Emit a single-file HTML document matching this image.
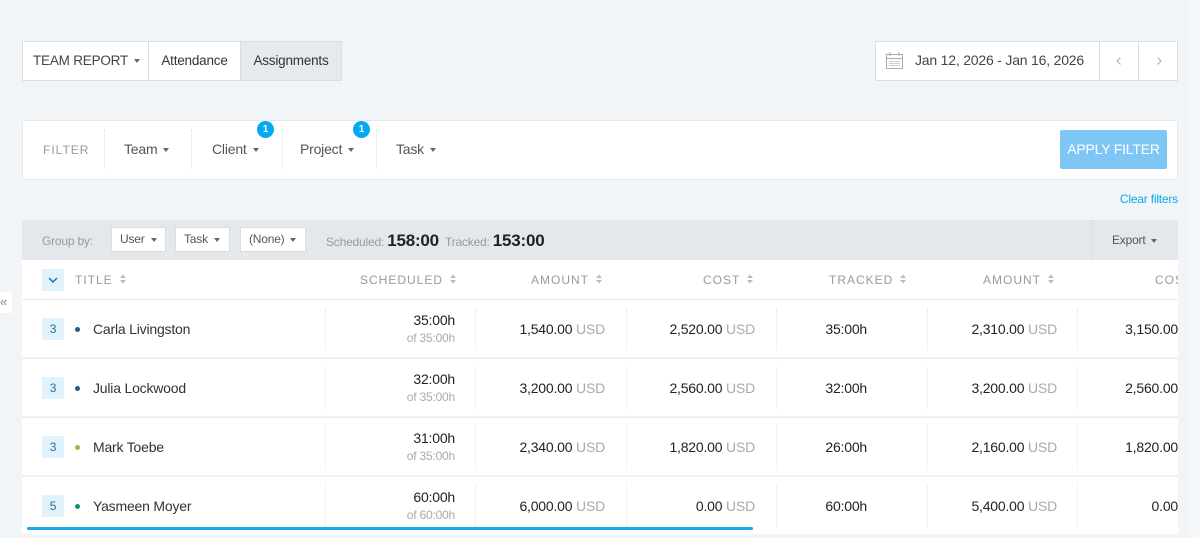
<!DOCTYPE html>
<html><head><meta charset="utf-8"><style>
*{box-sizing:border-box;margin:0;padding:0}
body{width:1200px;height:538px;overflow:hidden;background:#f2f5f8;font-family:"Liberation Sans",sans-serif;color:#333;position:relative;letter-spacing:-0.2px}
.a{position:absolute}
.car{display:inline-block;width:0;height:0;border-left:3.5px solid transparent;border-right:3.5px solid transparent;border-top:4px solid #666;vertical-align:middle;margin-left:6px}
.tab{position:absolute;top:41px;height:40px;line-height:38px;font-size:13.5px;border:1px solid #d7dde2;background:#fff;text-align:center}
.fl{position:absolute;top:141px;font-size:14px;color:#555}
.dv{position:absolute;top:130px;height:40px;border-left:1px dotted #dde2e6}
.badge{position:absolute;top:121px;width:17px;height:17px;border-radius:50%;background:#03a9f4;color:#fff;font-size:10px;text-align:center;line-height:17px;font-weight:bold;letter-spacing:0}
.sel{position:absolute;top:227px;height:25px;background:#fff;border:1px solid #d7dde2;font-size:12px;color:#555;line-height:23px;padding-left:8px}
.th{position:absolute;top:273px;font-size:12px;color:#999;letter-spacing:1px}
.so{display:inline-block;margin-left:6px;vertical-align:-1px}
.row{position:absolute;left:22px;width:1156px;height:58px;background:#fff;border-top:1px solid #eaedf0}
.num{position:absolute;left:20px;top:18px;width:22px;height:22px;background:#e1f2fc;color:#1e6fa8;font-size:12px;text-align:center;line-height:22px}
.dot{position:absolute;left:53px;top:27px;width:5px;height:5px;border-radius:50%}
.nm{position:absolute;left:71px;top:21px;font-size:14px;color:#333}
.v{position:absolute;font-size:14px;color:#222;text-align:right;white-space:nowrap}
.v span{color:#aaa}
.sub{font-size:12px;color:#999}
.vd{position:absolute;top:8px;height:42px;border-left:1px dotted #e2e6ea}
</style></head><body>
<svg width="0" height="0" style="position:absolute"><defs><symbol id="s" viewBox="0 0 8 12"><path d="M1 5L4 1.5 7 5z M1 7L4 10.5 7 7z" fill="#bbb"/></symbol></defs></svg>
<div class="a" style="right:0;top:0;width:12px;height:538px;background:#f5f7f9"></div>
<div class="tab" style="left:22px;width:127px;color:#444;padding-left:2px">TEAM REPORT<span class="car"></span></div>
<div class="tab" style="left:148px;width:93px">Attendance</div>
<div class="tab" style="left:240px;width:102px;background:#e5eaee">Assignments</div>

<div class="a" style="left:875px;top:41px;width:303px;height:40px;background:#fff;border:1px solid #d7dde2"></div>
<svg class="a" style="left:885px;top:51px" width="20" height="20" viewBox="0 0 20 20"><rect x="1.5" y="3.5" width="16" height="14" fill="none" stroke="#aaa"/><line x1="1.5" y1="7.5" x2="17.5" y2="7.5" stroke="#aaa"/><line x1="5" y1="1" x2="5" y2="5" stroke="#aaa"/><line x1="14" y1="1" x2="14" y2="5" stroke="#aaa"/><g fill="#ccc"><rect x="4" y="10" width="11" height="1"/><rect x="4" y="12" width="11" height="1"/><rect x="4" y="14" width="11" height="1"/></g></svg>
<div class="a" style="left:915px;top:52px;font-size:14px;color:#444">Jan 12, 2026 - Jan 16, 2026</div>
<div class="a" style="left:1099px;top:42px;height:38px;border-left:1px solid #d7dde2"></div>
<div class="a" style="left:1138px;top:42px;height:38px;border-left:1px solid #d7dde2"></div>
<svg class="a" style="left:1115px;top:56px" width="8" height="10"><path d="M5.5 1.5L2 5l3.5 3.5" fill="none" stroke="#aaa" stroke-width="1"/></svg>
<svg class="a" style="left:1155px;top:56px" width="8" height="10"><path d="M2.5 1.5L6 5 2.5 8.5" fill="none" stroke="#aaa" stroke-width="1"/></svg>

<div class="a" style="left:22px;top:120px;width:1156px;height:60px;background:#fff;border:1px solid #e6eaed"></div>
<div class="a" style="left:43px;top:143px;font-size:12px;color:#999;letter-spacing:1px">FILTER</div>
<div class="dv" style="left:104px"></div><div class="dv" style="left:191px"></div><div class="dv" style="left:282px"></div><div class="dv" style="left:376px"></div>
<div class="fl" style="left:124px">Team<span class="car"></span></div>
<div class="fl" style="left:212px">Client<span class="car"></span></div>
<div class="fl" style="left:300px">Project<span class="car"></span></div>
<div class="fl" style="left:396px">Task<span class="car"></span></div>
<div class="badge" style="left:257px">1</div><div class="badge" style="left:353px">1</div>
<div class="a" style="left:1060px;top:130px;width:107px;height:39px;background:#7ec7f5;border-radius:2px;color:#fff;font-size:14px;text-align:center;line-height:39px">APPLY FILTER</div>
<div class="a" style="right:22px;top:192px;font-size:12px;color:#03a9f4">Clear filters</div>

<div class="a" style="left:22px;top:220px;width:1156px;height:40px;background:#e4e8ec"></div>
<div class="a" style="left:42px;top:234px;font-size:12px;color:#999">Group by:</div>
<div class="sel" style="left:111px;width:55px">User<span class="car"></span></div>
<div class="sel" style="left:175px;width:55px">Task<span class="car"></span></div>
<div class="sel" style="left:240px;width:66px">(None)<span class="car"></span></div>
<div class="a" style="left:326px;top:231px;font-size:12px;color:#999;white-space:nowrap">Scheduled: <b style="font-size:17px;color:#222">158:00</b>&nbsp; Tracked: <b style="font-size:17px;color:#222">153:00</b></div>
<div class="a" style="left:1092px;top:220px;height:40px;border-left:1px dotted #cfd5da"></div>
<div class="a" style="left:1112px;top:233px;font-size:12px;color:#555">Export<span class="car"></span></div>

<div class="a" style="left:22px;top:260px;width:1156px;height:39px;background:#fff"></div>
<div class="a" style="left:42px;top:269px;width:22px;height:22px;background:#e1f2fc"></div>
<svg class="a" style="left:47px;top:275px" width="12" height="10"><path d="M2 3l4 4 4-4" fill="none" stroke="#1e6fa8" stroke-width="1.5"/></svg>
<div class="th" style="left:75px">TITLE<svg class="so" width="8" height="12"><use href="#s"/></svg></div>
<div class="th" style="left:360px">SCHEDULED<svg class="so" width="8" height="12"><use href="#s"/></svg></div>
<div class="th" style="left:531px">AMOUNT<svg class="so" width="8" height="12"><use href="#s"/></svg></div>
<div class="th" style="left:703px">COST<svg class="so" width="8" height="12"><use href="#s"/></svg></div>
<div class="th" style="left:829px">TRACKED<svg class="so" width="8" height="12"><use href="#s"/></svg></div>
<div class="th" style="left:983px">AMOUNT<svg class="so" width="8" height="12"><use href="#s"/></svg></div>
<div class="th" style="left:1155px;width:23px;overflow:hidden">COST</div>

<div class="a" style="left:0;top:292px;width:12px;height:21px;background:#fff;font-size:13px;color:#888;line-height:20px">«</div>

<div class="row" style="top:299px"><div class="num">3</div><div class="dot" style="background:#1a5f8f"></div><div class="nm">Carla Livingston</div>
<div class="vd" style="left:303px"></div><div class="vd" style="left:453px"></div><div class="vd" style="left:604px"></div><div class="vd" style="left:754px"></div><div class="vd" style="left:905px"></div><div class="vd" style="left:1055px"></div>
<div class="v" style="right:723px;top:12px;line-height:17px">35:00h<br><span class="sub">of 35:00h</span></div>
<div class="v" style="right:573px;top:21px">1,540.00 <span>USD</span></div>
<div class="v" style="right:423px;top:21px">2,520.00 <span>USD</span></div>
<div class="v" style="right:311px;top:21px">35:00h</div>
<div class="v" style="right:121px;top:21px">2,310.00 <span>USD</span></div>
<div class="v" style="right:0;top:21px">3,150.00</div></div>

<div class="row" style="top:358px"><div class="num">3</div><div class="dot" style="background:#1a5f8f"></div><div class="nm">Julia Lockwood</div>
<div class="vd" style="left:303px"></div><div class="vd" style="left:453px"></div><div class="vd" style="left:604px"></div><div class="vd" style="left:754px"></div><div class="vd" style="left:905px"></div><div class="vd" style="left:1055px"></div>
<div class="v" style="right:723px;top:12px;line-height:17px">32:00h<br><span class="sub">of 35:00h</span></div>
<div class="v" style="right:573px;top:21px">3,200.00 <span>USD</span></div>
<div class="v" style="right:423px;top:21px">2,560.00 <span>USD</span></div>
<div class="v" style="right:311px;top:21px">32:00h</div>
<div class="v" style="right:121px;top:21px">3,200.00 <span>USD</span></div>
<div class="v" style="right:0;top:21px">2,560.00</div></div>

<div class="row" style="top:417px"><div class="num">3</div><div class="dot" style="background:#8bc34a"></div><div class="nm">Mark Toebe</div>
<div class="vd" style="left:303px"></div><div class="vd" style="left:453px"></div><div class="vd" style="left:604px"></div><div class="vd" style="left:754px"></div><div class="vd" style="left:905px"></div><div class="vd" style="left:1055px"></div>
<div class="v" style="right:723px;top:12px;line-height:17px">31:00h<br><span class="sub">of 35:00h</span></div>
<div class="v" style="right:573px;top:21px">2,340.00 <span>USD</span></div>
<div class="v" style="right:423px;top:21px">1,820.00 <span>USD</span></div>
<div class="v" style="right:311px;top:21px">26:00h</div>
<div class="v" style="right:121px;top:21px">2,160.00 <span>USD</span></div>
<div class="v" style="right:0;top:21px">1,820.00</div></div>

<div class="row" style="top:476px"><div class="num">5</div><div class="dot" style="background:#16907a"></div><div class="nm">Yasmeen Moyer</div>
<div class="vd" style="left:303px"></div><div class="vd" style="left:453px"></div><div class="vd" style="left:604px"></div><div class="vd" style="left:754px"></div><div class="vd" style="left:905px"></div><div class="vd" style="left:1055px"></div>
<div class="v" style="right:723px;top:12px;line-height:17px">60:00h<br><span class="sub">of 60:00h</span></div>
<div class="v" style="right:573px;top:21px">6,000.00 <span>USD</span></div>
<div class="v" style="right:423px;top:21px">0.00 <span>USD</span></div>
<div class="v" style="right:311px;top:21px">60:00h</div>
<div class="v" style="right:121px;top:21px">5,400.00 <span>USD</span></div>
<div class="v" style="right:0;top:21px">0.00</div></div>
<div class="a" style="left:27px;top:527px;width:726px;height:3px;background:#1ea5e4;border-radius:2px"></div>
</body></html>
